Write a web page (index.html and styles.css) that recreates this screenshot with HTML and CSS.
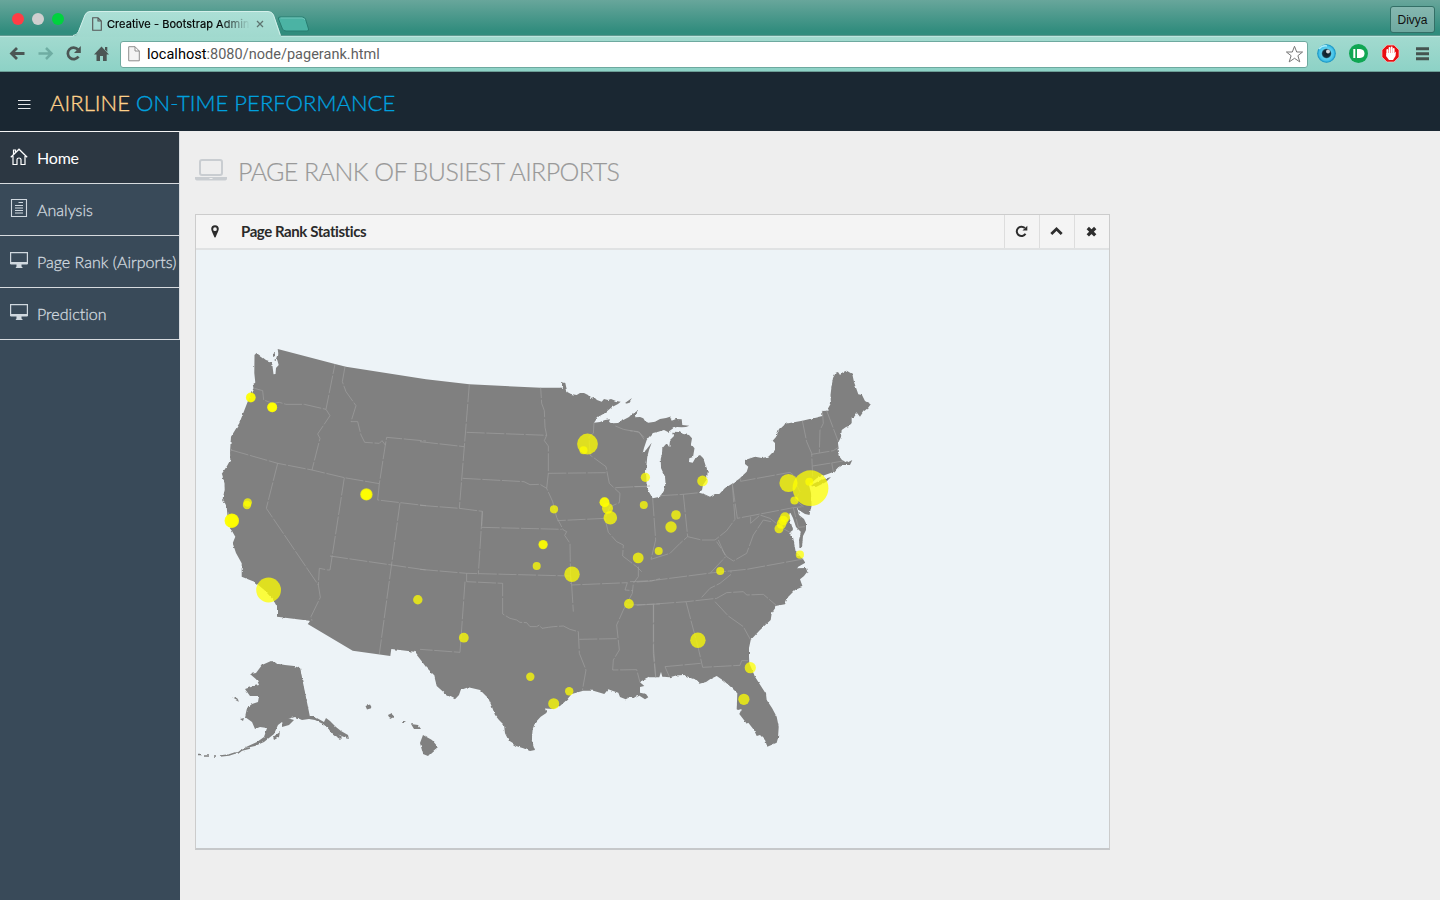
FILE: index.html
```html
<!DOCTYPE html>
<html lang="en">
<head>
<meta charset="utf-8">
<title>Creative - Bootstrap Admin</title>
<link rel="stylesheet" href="styles.css">
</head>
<body>
<div class="browser">
  <div class="tabstrip">
    <div class="lights"><i class="red"></i><i class="grey"></i><i class="green"></i></div>
    <div class="tab">
      <svg class="tab-shape" width="208" height="26" viewBox="0 0 208 26"><defs><linearGradient id="tg" x2="0" y2="1"><stop stop-color="#acdfd6"/><stop offset="1" stop-color="#a0d9ce"/></linearGradient></defs><path d="M0 25.500Q4 25 5 21.500L12 4Q13.500.5 17 .5H195Q199 .5 200.500 4L207 21.500Q208 25 208 25.500V26H0Z" fill="url(#tg)"/><path d="M0 24.500Q4 24.500 5.500 20.500L12 4Q13.500.5 17 .5H195Q199 .5 200.500 4L206 20.500Q207 24.500 208 24.500" fill="none" stroke="#d4f0eb"/></svg>
      <svg class="tab-doc" width="10" height="14" viewBox="0 0 10 14"><path d="M.7.7H6L9.300 4V13.300H.7ZM6 .7V4H9.300" fill="none" stroke="#555" stroke-width="1.100"/></svg>
      <span class="tab-title">Creative - Bootstrap Admin</span>
      <svg class="tab-close" width="8" height="8" viewBox="0 0 8 8"><path d="M1 1 7 7M7 1 1 7" stroke="#5e7470" stroke-width="1.300"/></svg>
    </div>
    <svg class="newtab" width="33" height="16" viewBox="0 0 33 16"><path d="M3 1H25Q27.500 1 28.500 3L31.500 13Q32 15 30 15H9Q6.500 15 5.500 13L1.500 3Q1 1 3 1Z" fill="#4bb3a4" stroke="#277c70"/><path d="M3.500 2H25Q27 2 28 4" stroke="#72c5b9" fill="none"/></svg>
    <div class="user">Divya</div>
  </div>
  <div class="toolbar">
    <svg width="112" height="34" viewBox="0 37 112 34" fill="none">
      <path d="M24.500 53.500H12M17 48 11.500 53.500 17 59" stroke="#4b5654" stroke-width="2.800"/>
      <path d="M38.500 53.500H51M46 48 51.500 53.500 46 59" stroke="#6fada3" stroke-width="2.500"/>
      <path d="M78.500 56.500A5.800 5.800 0 1 1 78 49.500" stroke="#4b5654" stroke-width="2.700"/><path d="M80.800 46V53H74Z" fill="#4b5654"/>
      <path d="M101.500 46.500 109 54.500H106.700V61H103V56H100V61H96.500V54.500H94Z" fill="#4b5654"/><path d="M105 47H107.300V52L105 49.500Z" fill="#4b5654"/>
    </svg>
    <div class="address">
      <svg width="12" height="16" viewBox="0 0 12 16"><path d="M.7.7H7L11.300 5V14.800H.7ZM7 .7V5H11.300" fill="#f3f3f3" stroke="#8e8e8e"/></svg>
      <span class="url"><b>localhost</b>:8080/node/pagerank.html</span>
      <svg class="star" width="19" height="19" viewBox="0 0 19 19"><path d="M9.500 1.300 11.700 7H17.600L12.900 10.700 14.800 16.900 9.500 13.300 4.200 16.900 6.100 10.700 1.400 7H7.300Z" fill="#fff" stroke="#777" stroke-linejoin="round"/></svg>
    </div>
    <svg class="ext" width="120" height="30" viewBox="1312 39 120 30">
      <defs><radialGradient id="eye"><stop stop-color="#101a22"/><stop offset=".42" stop-color="#16303f"/><stop offset=".56" stop-color="#5bd0ee"/><stop offset=".8" stop-color="#43bfe6"/><stop offset="1" stop-color="#0787bb"/></radialGradient></defs>
      <circle cx="1326.500" cy="53.500" r="9.300" fill="url(#eye)"/><circle cx="1328" cy="51.500" r="2" fill="#cfd5da"/><path d="M1319 49Q1322 45 1327 46" stroke="#a9edfa" stroke-width="1.500" fill="none"/>
      <circle cx="1358.500" cy="53.500" r="9.500" fill="#10a653"/><path d="M1354.300 49V58" stroke="#fff" stroke-width="2"/><path d="M1357 49H1360Q1364.500 49.300 1364.500 53.500T1360 58H1357Z" fill="#fff"/>
      <path d="M1387 45H1394L1399 50V57L1394 62H1387L1382 57V50Z" fill="#e80f13" stroke="#f4c7c5" stroke-width=".7"/><path d="M1387.300 54V50M1389.500 54V48M1391.700 54V47.500M1393.700 54V49" stroke="#fff" stroke-width="1.800" stroke-linecap="round"/><path d="M1386.500 53H1394.500L1396 51.500 1395.500 56 1393 60H1389L1386 56Z" fill="#fff"/>
      <path d="M1416 48.700H1429M1416 53.700H1429M1416 58.700H1429" stroke="#455450" stroke-width="3"/>
    </svg>
  </div>
</div>
<header class="header">
  <svg width="13" height="11" viewBox="0 0 13 11"><path d="M0 1.500H12.500M0 5.500H12.500M0 9.500H12.500" stroke="#e6e8ea" stroke-width="1.200"/></svg>
  <div class="logo">AIRLINE <span>ON-TIME PERFORMANCE</span></div>
</header>
<div class="body">
  <nav class="sidebar">
    <a class="item active"><svg width="18" height="18" viewBox="0 0 18 18"><path d="M.8 9.200 9 1.200 17.200 9.200M3 8V16.500H7V11.500Q7 10 9 10T11 11.500V16.500H15V8M3.500 6V2H5.500V4" fill="none" stroke="currentColor" stroke-width="1.200"/></svg><span>Home</span></a>
    <a class="item"><svg width="18" height="20" viewBox="0 0 18 20"><path d="M1.500 1.500H16.500V18.500H1.500ZM5 7.500H13M5 10H13M5 12.500H13M5 15H13M8.500 4.500H13" fill="none" stroke="currentColor" stroke-width="1.100"/></svg><span>Analysis</span></a>
    <a class="item"><svg width="18" height="18" viewBox="0 0 18 18"><path d="M.6 1.600H17.400V12.500H.6Z" fill="none" stroke="currentColor" stroke-width="1.200"/><path d="M.5 11H17.500V13.500H11.500V15.500L13 17H5.500L6.500 15.500V13.500H.5Z" fill="currentColor"/></svg><span>Page Rank (Airports)</span></a>
    <a class="item"><svg width="18" height="18" viewBox="0 0 18 18"><path d="M.6 1.600H17.400V12.500H.6Z" fill="none" stroke="currentColor" stroke-width="1.200"/><path d="M.5 11H17.500V13.500H11.500V15.500L13 17H5.500L6.500 15.500V13.500H.5Z" fill="currentColor"/></svg><span>Prediction</span></a>
  </nav>
  <main class="main">
    <h1 class="title"><svg width="32" height="22" viewBox="0 0 32 22"><rect x="5" y="1" width="22" height="15" rx="2" fill="none" stroke="#c9cdd1" stroke-width="2"/><path d="M0 18H32V19.500Q32 21.500 29 21.500H3Q0 21.500 0 19.500Z" fill="#c9cdd1"/><path d="M14.500 19.500H17.500" stroke="#eee"/></svg><span>PAGE RANK OF BUSIEST AIRPORTS</span></h1>
    <section class="panel">
      <div class="panel-head">
        <svg class="pin" width="8" height="13" viewBox="0 0 8 13"><path d="M4 .3A3.800 3.800 0 0 1 7.800 4.100C7.800 6 5.800 9 4.700 12Q4 13 3.300 12C2.200 9 .2 6 .2 4.100A3.800 3.800 0 0 1 4 .3ZM4 2.300A1.800 1.800 0 1 0 4 6 1.800 1.800 0 0 0 4 2.300Z" fill="#2b2b2b" fill-rule="evenodd"/></svg>
        <h2>Page Rank Statistics</h2>
        <span class="tool"><svg width="13" height="13" viewBox="0 0 13 13"><path d="M10.500 8.800A4.700 4.700 0 1 1 9.800 3" fill="none" stroke="#2e2e2e" stroke-width="2"/><path d="M12.300.7V5.500H7.500Z" fill="#2e2e2e"/></svg></span>
        <span class="tool"><svg width="13" height="13" viewBox="0 0 13 13"><path d="M1.300 9 6.500 4 11.700 9" fill="none" stroke="#2e2e2e" stroke-width="2.800"/></svg></span>
        <span class="tool"><svg width="13" height="13" viewBox="0 0 13 13"><path d="M2.800 3 10.200 10.400M10.200 3 2.800 10.400" stroke="#2e2e2e" stroke-width="3.300"/></svg></span>
      </div>
      <svg class="map" width="913" height="598" viewBox="196 250 913 598">
        <defs><filter id="coast" filterUnits="userSpaceOnUse" x="196" y="330" width="700" height="440" color-interpolation-filters="sRGB"><feTurbulence type="fractalNoise" baseFrequency=".2" numOctaves="2" seed="4"/><feDisplacementMap in="SourceGraphic" scale="2.600" xChannelSelector="R" yChannelSelector="G"/></filter></defs>
        <path d="M277.700 349 335 364 346 366.700 426 379.300 469.300 384.300 540.700 387.700 562 387.700V398L470 396 340 376 279 359ZM391.300 649 390.300 656 352.700 650.700 307.700 624 320 610 400 635ZM300 668 310 717 300 712 292 680Z" fill="#808080"/>
        <g fill="#808080" filter="url(#coast)">
          <path d="M277.700 351 335 366 346 368.700 426 381.300 469.300 386.300 540.700 389.700 562 387.700V382L565.300 383 567.300 392 571 394 576.700 395 580 393 584 393 588 395 590.700 398 594 397 597 400 601.700 401.700 604 399 608 400 611 399 616 401 620.700 401.700 618 404 611.700 407.300 605 413 598 417 594 422.700 600 422 605 420 610 419.300 609 422 612.700 423.300 618 423 623.300 420 629 417 633 413 638.300 409 637 412 635 417.300 640 417 643.300 418.300 645 421 648.300 422.700 655 421.700 660 419 666 418 670 416.700 671.700 420.700 676 419 681.700 419.300 682.300 425 689.300 425.700 686 427 681.700 427.300 677 427 673.300 428.300 668 432 664 430 658.300 431.700 653 433 649 437 646.700 440 644 448 642.700 453.300 646 450 651.700 442.700 649 450 647.300 456.700 646 470 646.700 486.700 649 492 652.700 498.300 660 496.700 664 490 665.500 483 665 476.700 661 468 660.700 459 662 454 662.300 448.300 666.700 443.300 669.300 447.300 670 440 674 436 673.300 431.700 679 432 683.300 434 689 435 692 438.300 691 444 694.500 448.300 693 457 689.300 458.300 689 462 692.700 462.700 696 457 700 455 703.300 458.300 706 467 707.700 471.700 707 479 703 485 702 490 699 492.700 704 494 710 496.700 715 494 719.300 494 725 488 731.700 484 739 479 746.700 471.700 748.300 466.700 745 464 745 460 755 456.700 762 458 768.300 456.700 775 450V443L772.700 440.700 776 437 779 429 783.300 425 787 423.500 802.300 420.700 822.300 416V411L826.700 410.700 831 403.300 830.500 395 831.500 386.700 833 378 835.700 372.700 838 372 840 375 843 372 846.700 370.700 852.300 374 854 382 858.300 394.300 862 395 865 401 870.700 404.300 868 408 863.300 411.700 860 416.700 857 413 854 417 851.700 417.300V423L849 426 846 427 841.700 430 841 437 838 443.300 839 452 838.300 455 842 460 847 462.700 852.300 460 850 465 842 465 838.300 467.300 834 471.700 825 475 817 478 809 485 811 493 811.500 505 809.500 515 805 514 797 509 799 515 804 519 806 523.300V530L803 536 802 547 799.500 548 799 540 801 532 796 527 793 518 790 512 789 516 791 523 793 530 789 533 793 537 795.700 551.700 803.300 559.500 805.300 562.700 795.700 568.300 806 568 807.300 571.700 804 576 800 579.300 802.700 586.700 795 590 788.300 596.700 785 604.300 776.700 605.700 771.700 613.300 770.700 620 760 630 750.700 640 749 648V656.700L749.300 663.300 755 676.700 766 694 766.700 700 772 708 776.700 716.700 778.700 726.700 778 738 776.700 742.700 767.300 746.700 765 740 760 735 756.700 736 754 730 748.300 722.700 747 724 739.300 714 741.700 709 738 710 736.700 709.300 737.300 693.300 731.700 687.700 724 681 716.700 676 710 679.300 706 682 699.300 683.700 695 679.300 683.300 675 676 675.500 670 677.300 662.300 676.700 661 672 659.300 677.300 650 677.300 640 682.300 644.300 686 640 687 640 692.700 646 694 648.300 697.300 645 699.300 638.300 695 633.300 698.300 630 697 625.700 699.300 620 697 618.300 692.700 613 691 608.300 689.300 604.300 694 593.300 690.700 583.300 690.700 571.700 694 566.700 700 560 706 553.300 709 545 708.500 546.700 712.700 540.700 716.700 535 723 532.700 729.300 531.700 740 535 750 530 751 523.300 748.300 516 746 509.300 741.700 505 733.300 504 725 499 720 495 715 492 707 488.300 698.300 480 690 468.300 687.300 460.700 690 459 695 455 699.300 446.700 695 436.700 686 434 675 426 667 420 659 414.300 651.700 391.300 649 388 652 352.700 647 311 624 309.300 620.700 277 616.700V606.700L273.300 600 264.300 590 254.300 581.700 241.700 576.700V563.300L236 553 232.700 543.300 235.300 536.700 232 531 228.300 526 226.700 506.700 222.700 498.300 224.700 490 224.500 483.300 221.700 474 227 466 230.300 460 230 452 231 436.700 239.300 423.300 246 406 251 393.300 253.500 388.300 252.700 384.300 255.300 382.700 254.300 373 254.500 355 256.500 353 266 360 272 362 273.500 374.300 275.500 374 276 368 278.700 365 277 359 279.300 352Z"/>
          <path d="M813 484 821 480 831 477 826 482 816 487 811 486ZM625 403 632 398 628 404ZM273 354 275 353V356L273 357ZM274 360 276 359 276 361Z"/>
          <path d="M250.300 674 256 673 262 665 271 661 279 664 285 665 294 666 300 668 309 717 315 717 324 722 326 718 330 721 336 727 341 731 348 735 349 739 344 737 337 734 329 729 323 724 315 720 309 719 302 720 295 717 288 719 284 726 282 722 278 725 274 734 264 742 255 746 246 748 238 753 246 747 257 742 264 737 267 728 260 727 255 729 252 722 245 717 247 708 252 704 258 702 259 696 250 696 245 689 254 686 259 685 257 680 250 674Z"/>
          <path d="M326 725 333 728 342 738 340 740 332 734ZM273 737 280 732 279 737 274 740ZM232 697 237 698 239 701ZM240 719 244 718 243 721ZM282 724 287 718 294 720 289 725 282 727ZM365.500 706 370 704.500 372 708 367 709.500ZM388 715 392 713 394 717 390 719ZM402 721 406 721 403 723ZM411 724 418 725 421 729 414 729ZM423 735 432 740 438 747 432 752 428 756 423 754 420 743Z"/>
          <path d="M198 754.500H201M204 756H209M214 756H216M220 756 229 755 235 753H238L242 750 250 748" fill="none" stroke="#808080" stroke-width="1.500"/>
        </g>
        <g class="borders">
          <g transform="translate(196 340) scale(.33333)">
            <path d="M175 145 200 152 203 180 230 190 250 187 270 193 325 193 390 208 417 72M447 80 439 125 450 155 480 197 465 245 485 245 495 285 506 307 550 310 558 302 568 315M390 208 402 227 365 282 372 295 348 390M105 330 245 370 348 390 445 413 550 431 568 315 572 292 690 303M245 370 211 505 367 735M445 413 402 690 395 690 370 685 367 735 373 772 345 830 348 842M550 431 545 480 690 497M612 489 550 942M402 648 690 690"/>
          </g>
          <g transform="translate(420 370) scale(.33333)">
            <path d="M148 43 133 230 118 415M0 215 133 230M140 187 380 196 375 172 373 122 365 100 362 53M380 196 373 212 385 228 385 310 380 355 398 395 410 442 430 480 440 485 434 496 450 520 452 642M128 325 312 335 330 344 360 343 380 355M0 406 118 415 187 424 185 472 425 478M187 424 175 613M385 310 562 308M522 158 520 190 507 200 510 255 558 290 568 340 600 370 598 398 570 410 555 445 412 452M586 353 690 348M586 168 610 178 658 187 672 208M555 445 565 487 590 515 610 525 608 558 650 590 665 605"/>
            <path d="M0 598 140 610 452 618M140 610 140 635 248 640 248 732 270 745 290 750 300 757 320 758 330 770 350 770 358 765 366 775 385 772 400 770 430 768 450 778 475 785 478 850 498 900 487 962M135 635 120 847 0 838M452 618 455 645 622 638 615 660 638 662M455 645 460 725M478 808 590 806"/>
          </g>
          <g transform="translate(420 560) scale(.33333)"><path d="M655 20 655 50 640 70 637 100 610 150 590 195 598 270 580 300 578 330 650 329 660 367M650 66 695 63 720 56M622 135 720 132M701 132 701 270 707 353"/></g>
          <g transform="translate(630 360) scale(.33333)">
            <path d="M0 212 25 215 42 232M12 380H48M68 415 77 540 63 598M90 407 160 403 207 398M160 403 173 530M63 598 120 580 150 550 173 530 215 540 255 540 290 512 315 478 307 372M307 372 322 475 490 443M332 355V364L480 337 497 350 500 375 510 395 495 420 520 440 490 443 505 502 525 500M517 182 530 245 545 280 548 350M577 152 580 190 570 210 568 278M590 152 625 245M545 283 610 272 625 262M548 318 610 308 640 303M605 308 610 335M362 470 362 490 390 465 420 475 455 503 485 520M423 485 400 480 370 525 350 580 310 603 290 590 260 545M265 540 285 585"/>
          </g>
          <g transform="translate(630 540) scale(.33333)"><path d="M0 125 65 122 250 98 350 88 520 57M20 196 170 185 260 175 290 158 340 155 350 165 400 163 440 197M215 172 240 145 270 130 303 103 303 92M242 98 287 50M168 185 205 325 218 382 330 376 335 362 355 362M255 185 295 228 340 260 362 300M70 195V340L77 410M105 380 212 370M105 380 118 410"/></g>
        </g>
        <g class="spots">
          <circle cx="250.800" cy="397.500" r="4.900"/><circle cx="250.800" cy="397.500" r="4.500"/><circle cx="272.200" cy="407.300" r="4.900"/><circle cx="272.200" cy="407.300" r="4.900"/><circle cx="272.200" cy="407.300" r="4"/><circle cx="247.700" cy="502.500" r="4.200"/><circle cx="247" cy="505" r="4.200"/><circle cx="231.800" cy="520.700" r="7.200"/><circle cx="231.800" cy="520.700" r="7"/><circle cx="231.800" cy="520.700" r="6"/><circle cx="366.400" cy="494.400" r="6.200"/><circle cx="366.400" cy="494.400" r="5.500"/><circle cx="366.400" cy="494.400" r="5"/>
          <circle cx="268.600" cy="590" r="12.400"/><circle cx="417.800" cy="599.700" r="4.700"/><circle cx="463.800" cy="637.700" r="4.900"/><circle cx="530.300" cy="676.700" r="4.200"/><circle cx="569.200" cy="691.300" r="4.200"/><circle cx="553.700" cy="703.700" r="5.500"/><circle cx="572" cy="574.300" r="7.700"/><circle cx="536.700" cy="565.900" r="4"/><circle cx="543.100" cy="544.600" r="4.700"/><circle cx="543.100" cy="544.600" r="4.200"/><circle cx="554" cy="509.300" r="4.100"/><circle cx="587.500" cy="444" r="10.400"/><circle cx="583.500" cy="450.200" r="4"/><circle cx="604.500" cy="502.200" r="5"/><circle cx="604.500" cy="502.200" r="4.700"/><circle cx="607.500" cy="508.300" r="5.500"/><circle cx="610.300" cy="517.700" r="6.800"/><circle cx="638.200" cy="557.900" r="5.400"/><circle cx="628.900" cy="603.900" r="4.900"/><circle cx="645.400" cy="477.300" r="4.600"/><circle cx="643.800" cy="505.100" r="4"/><circle cx="676" cy="515" r="4.800"/><circle cx="671" cy="527" r="5.700"/><circle cx="658.700" cy="551" r="4"/><circle cx="720.200" cy="571" r="4"/><circle cx="702.500" cy="480.900" r="5.300"/><circle cx="788.500" cy="483" r="9.100"/><circle cx="810.500" cy="488.200" r="17.900"/><circle cx="809.300" cy="481.700" r="4"/><circle cx="794.500" cy="500.500" r="4.100"/><circle cx="785" cy="517.200" r="5"/><circle cx="783.200" cy="520.500" r="4.800"/><circle cx="781.500" cy="524" r="4.800"/><circle cx="779" cy="528.700" r="4.500"/><circle cx="799.900" cy="554.700" r="4.100"/><circle cx="697.900" cy="640.300" r="7.700"/><circle cx="750.300" cy="667.700" r="5.600"/><circle cx="743.900" cy="699.300" r="5.600"/>
        </g>
      </svg>
    </section>
  </main>
</div>
</body>
</html>
```
FILE: styles.css
```css
* { box-sizing: border-box; }
body { margin: 0; width: 1440px; height: 900px; overflow: hidden; display: flex; flex-direction: column; background: #eee; font-family: Lato, sans-serif; }
.browser { height: 72px; flex: none; }
.tabstrip { height: 36px; display: flex; align-items: flex-start; background: linear-gradient(#68a69b, #308c7d 90%); border-bottom: 1px solid #5e9a90; }
.lights { width: 76px; padding: 13px 0 0 12px; display: flex; gap: 8px; }
.lights i { width: 12px; height: 12px; border-radius: 50%; }
.red { background: #ff3d45; }
.grey { background: #cfcfcf; }
.green { background: #00d23e; }
.tab { position: relative; width: 202px; height: 24px; margin-top: 12px; display: flex; align-items: center; padding-left: 16px; }
.tab-shape { position: absolute; left: -3px; top: -1px; }
.tab-doc, .tab-title, .tab-close { position: relative; }
.tab-title { width: 144px; margin-left: 5px; font: 11px/14px Inter, sans-serif; letter-spacing: .05px; color: #000; -webkit-text-stroke: .2px; white-space: nowrap; overflow: hidden; -webkit-mask-image: linear-gradient(90deg, #000 112px, transparent 143px); }
.tab-close { margin-left: 5px; }
.newtab { margin: 16px 0 0 -1px; }
.user { margin: 6px 5px 0 auto; width: 45px; height: 27px; border: 1px solid #336f66; border-radius: 3px; background: linear-gradient(#86b8b0, #6ea9a0); text-align: center; font: 12px/26px "Liberation Sans", sans-serif; color: #111; }
.toolbar { height: 36px; display: flex; align-items: center; border-top: 1px solid #bce6df; border-bottom: 1px solid #6b9d95; background: linear-gradient(#a2dacf, #8dd2c6); }
.address { width: 1188px; height: 27px; margin-left: 8px; display: flex; align-items: center; padding: 0 3px 0 7px; background: #fff; border: 1px solid #6ea99f; border-radius: 3px; }
.url { margin: 1px 0 0 7px; font: 14.5px/20px Roboto, sans-serif; letter-spacing: .02px; color: #5f5f5f; white-space: nowrap; }
.url b { font-weight: 400; color: #000; }
.star { margin-left: auto; }
.ext { margin-left: 4px; }
.header { height: 59px; flex: none; background: #1a2732; display: flex; align-items: center; padding: 2px 0 0 18px; }
.header svg { margin: 4px 1px 0 0; }
.logo { margin-left: 18px; font-size: 22px; font-weight: 300; line-height: 30px; letter-spacing: .04px; color: #fed189; white-space: nowrap; -webkit-text-stroke: .35px; }
.logo span { color: #00a0df; }
.body { flex: 1; display: flex; }
.sidebar { width: 180px; background: #394a59; }
.item { height: 52px; display: flex; align-items: center; padding-left: 10px; width: 180px; color: #d0d8df; font-size: 16px; font-weight: 300; white-space: nowrap; border-bottom: 1px solid #d7dbdf; border-right: 1px solid #d7dbdf; -webkit-text-stroke: .3px; letter-spacing: .03px; }
.item.active { height: 53px; background: #2c3742; border-top: 1px solid #f5f5f5; color: #fff; font-weight: 400; letter-spacing: -.2px; -webkit-text-stroke: 0; }
.item svg { flex: none; margin-top: -4px; }
.item.active svg { margin-top: -2px; }
.item span { margin-left: 9px; }
.main { padding: 0 0 0 15px; }
.title { height: 83px; margin: 0; display: flex; align-items: center; font-size: 25px; font-weight: 300; letter-spacing: -.58px; color: #999; -webkit-text-stroke: .2px; }
.title svg { margin-top: -6px; }
.title span { margin: -3px 0 0 11px; white-space: nowrap; }
.panel { width: 915px; height: 636px; border: 1px solid #ccc; border-bottom: 2px solid #c6c8ca; background: #edf3f7; }
.panel-head { height: 35px; display: flex; align-items: stretch; background: #f4f4f4; border-bottom: 2px solid #e0e2e3; }
.pin { align-self: center; margin-left: 15px; }
.panel-head h2 { margin: 0 auto 0 22px; font-size: 15px; line-height: 33px; font-weight: 700; letter-spacing: -.42px; color: #2a2a2a; }
.tool { width: 35px; border-left: 1px solid #ddd; display: flex; align-items: center; justify-content: center; padding: 0 2px 1px 0; }
.map { display: block; }
.borders { fill: none; stroke: #a0a0a0; stroke-width: 2; stroke-dasharray: 54 5; }
.spots { fill: #ff0; fill-opacity: .75; }
```
